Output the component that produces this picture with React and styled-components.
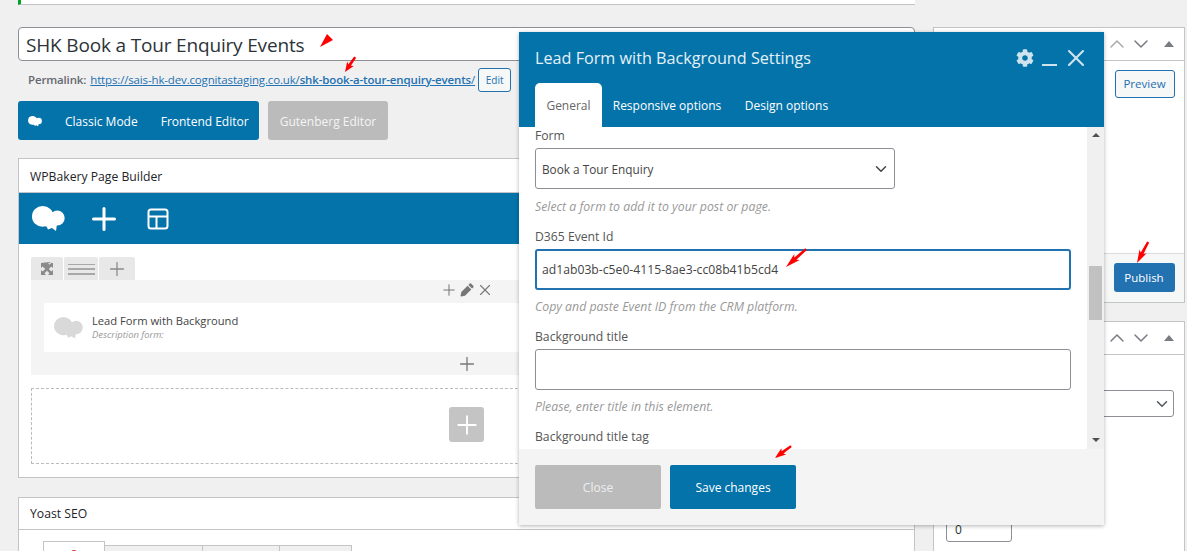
import React from 'react';
import styled, { createGlobalStyle } from 'styled-components';
import { Plus, X, ChevronUp, ChevronDown } from 'lucide-react';
import { FaCog } from 'react-icons/fa';

const Global = createGlobalStyle`
  html, body { margin: 0; padding: 0; height: 551px; overflow: hidden; background: #f0f0f1; }
  * { box-sizing: border-box; }
  body { font-family: "Open Sans", "Noto Sans", sans-serif; color: #3c434a; }
`;

const Page = styled.div`
  position: relative;
  width: 1187px;
  height: 551px;
  overflow: hidden;
  display: flex;
  gap: 18px;
  padding-left: 18px;
  align-items: flex-start;
`;
const Main = styled.div`
  width: 897px;
  flex: none;
  display: flex;
  flex-direction: column;
`;
const Side = styled.div`
  width: 251.5px;
  flex: none;
  padding-top: 27px;
  display: flex;
  flex-direction: column;
  gap: 18px;
`;
const Notice = styled.div`
  height: 5px;
  background: #fff;
  border-left: 3px solid #00a32a;
  border-bottom: 1px solid #c3c4c7;
  margin-bottom: 22px;
`;
const TitleInput = styled.div`
  height: 34px;
  background: #fff;
  border: 1px solid #8c8f94;
  border-radius: 4px;
  font-size: 19px;
  letter-spacing: -0.17px;
  line-height: 34px;
  padding-left: 7px;
  color: #2c3338;
`;
const PermaRow = styled.div`
  height: 24px;
  margin-top: 7px;
  padding-left: 10px;
  display: flex;
  align-items: center;
  font-size: 11.5px;
  letter-spacing: -0.15px;
  color: #646970;
`;
const PermaLabel = styled.b`
  font-weight: 600;
  margin-right: 4px;
  padding-bottom: 2px;
`;
const PermaLink = styled.a`
  color: #2271b1;
  text-decoration: underline;
  padding-bottom: 2px;
  b { font-weight: 600; }
`;
const SmallButton = styled.span`
  margin-left: 3px;
  width: 33px;
  height: 24px;
  border: 1px solid #2271b1;
  border-radius: 3px;
  background: #f6f7f7;
  color: #2271b1;
  font-size: 10px;
  letter-spacing: 0;
  display: flex;
  align-items: center;
  justify-content: center;
`;
const ModeBar = styled.div`
  display: flex;
  margin-top: 9px;
  gap: 9px;
  height: 39px;
`;
const ModeGroup = styled.div`
  width: 241px;
  background: #0473aa;
  border-radius: 3px;
  color: #fff;
  font-size: 12px;
  display: flex;
  align-items: center;
  padding: 1px 0 0 10px;
`;
const ModeText = styled.span`
  margin-left: ${p => p.$gap}px;
`;
const GrayMode = styled.div`
  width: 120px;
  background: #bbbbbb;
  border-radius: 3px;
  color: #f4f4f4;
  font-size: 12px;
  padding-top: 1px;
  display: flex;
  align-items: center;
  justify-content: center;
`;
const Box = styled.section`
  background: #fff;
  border: 1px solid #c3c4c7;
  margin-top: ${p => p.$top}px;
`;
const BoxHead = styled.h2`
  margin: 0;
  height: 34px;
  padding-left: 11px;
  border-bottom: 1px solid #c3c4c7;
  font-size: 12.2px;
  font-weight: 500;
  line-height: 35px;
  color: #1d2327;
`;
const Toolbar = styled.div`
  height: 51px;
  background: #0473aa;
  display: flex;
  align-items: center;
  color: #fff;
  padding-left: 13px;
`;
const ToolSlot = styled.span`
  display: flex;
  margin-left: ${p => p.$gap || 0}px;
`;
const BuilderBody = styled.div`
  padding: 13px 12px 13px;
`;
const RowTabs = styled.div`
  display: flex;
  gap: 1px;
  height: 23px;
`;
const RowTab = styled.span`
  width: ${p => p.$w}px;
  background: #e8e8e8;
  border-radius: 2px 2px 0 0;
  display: flex;
  align-items: center;
  justify-content: center;
  color: #8a8a8a;
`;
const Lines = styled.span`
  width: 27px;
  height: 11px;
  margin-top: 1px;
  border-top: 1px solid #a8a8a8;
  border-bottom: 2px solid #a8a8a8;
  position: relative;
  &::after {
    content: "";
    position: absolute;
    left: 0;
    right: 0;
    top: 3px;
    height: 2px;
    background: #a8a8a8;
  }
`;
const Row = styled.div`
  height: 95px;
  background: #f4f4f4;
  padding: 0 13px;
  display: flex;
  flex-direction: column;
`;
const RowControls = styled.div`
  height: 23px;
  padding-bottom: 3px;
  display: flex;
  align-items: center;
  justify-content: center;
  color: #777;
`;
const ControlSlot = styled.span`
  width: 18px;
  display: flex;
  align-items: center;
  justify-content: center;
`;
const Element = styled.div`
  height: 49px;
  background: #fff;
  display: flex;
  align-items: center;
  padding-left: 10px;
`;
const ElementText = styled.div`
  margin-left: 9px;
  display: flex;
  flex-direction: column;
  padding-bottom: 2px;
`;
const ElementTitle = styled.span`
  font-size: 11.2px;
  line-height: 15px;
  font-weight: 500;
  color: #444;
`;
const ElementDesc = styled.span`
  font-size: 9.4px;
  line-height: 13px;
  font-style: italic;
  color: #999;
`;
const RowFoot = styled.div`
  flex: 1;
  display: flex;
  align-items: center;
  justify-content: center;
  color: #777;
`;
const Dashed = styled.div`
  margin-top: 13px;
  height: 76px;
  padding-bottom: 3px;
  border: 1px dashed #bbb;
  display: flex;
  align-items: center;
  justify-content: center;
`;
const AddTile = styled.span`
  width: 35px;
  height: 35px;
  border-radius: 3px;
  background: #c4c4c4;
  color: #fff;
  display: flex;
  align-items: center;
  justify-content: center;
`;
const YoastHead = styled(BoxHead)`
  height: 32px;
  line-height: 32px;
`;
const YoastTabs = styled.div`
  display: flex;
  align-items: flex-end;
  margin: 11px 0 0 24px;
  height: 40px;
`;
const YoastTab = styled.span`
  width: ${p => p.$w}px;
  height: ${p => (p.$active ? 40 : 36)}px;
  background: ${p => (p.$active ? '#fff' : '#f0f0f1')};
  border: 1px solid #c3c4c7;
  border-left-width: ${p => (p.$first ? 1 : 0)}px;
  display: flex;
  justify-content: center;
  padding-top: 8px;
`;
const RedDot = styled.i`
  width: 6px;
  height: 6px;
  border-radius: 50%;
  background: #dc3232;
`;
const SideHead = styled.div`
  height: 33px;
  border-bottom: 1px solid #c3c4c7;
  display: flex;
  align-items: center;
  justify-content: flex-end;
  padding-right: 10px;
  color: #787c82;
`;
const TriUp = styled.span`
  width: 0;
  height: 0;
  margin-left: 11px;
  border: 5px solid transparent;
  border-top-width: 0;
  border-bottom: 6px solid #787c82;
`;
const PublishTop = styled.div`
  height: 192px;
  padding: 9px 9px 0;
  display: flex;
  justify-content: flex-end;
  align-items: flex-start;
`;
const PreviewBtn = styled.span`
  width: 60px;
  height: 28px;
  padding-bottom: 2px;
  border: 1px solid #2271b1;
  border-radius: 3px;
  background: #f6f7f7;
  color: #2271b1;
  font-size: 11.5px;
  display: flex;
  align-items: center;
  justify-content: center;
`;
const PublishFoot = styled.div`
  height: 49px;
  border-top: 1px solid #dcdcde;
  background: #f6f7f7;
  padding: 9px 9px 0;
  display: flex;
  justify-content: flex-end;
`;
const PublishBtn = styled.span`
  width: 61px;
  height: 29px;
  border-radius: 3px;
  background: #2271b1;
  color: #fff;
  font-size: 11.5px;
  display: flex;
  align-items: center;
  justify-content: center;
`;
const AttrBody = styled.div`
  padding: 35px 10px 0 12px;
  height: 198px;
`;
const AttrSelect = styled.div`
  width: 228px;
  height: 27px;
  border: 1px solid #8c8f94;
  border-radius: 3px;
  display: flex;
  align-items: center;
  justify-content: flex-end;
  padding-right: 2px;
  color: #50575e;
`;
const AttrInput = styled.div`
  margin-top: 105px;
  width: 66px;
  height: 20px;
  border: 1px solid #8c8f94;
  border-radius: 3px;
  padding-left: 8px;
  font-size: 12px;
  line-height: 14px;
  color: #2c3338;
`;

const Modal = styled.div`
  position: absolute;
  left: 519px;
  top: 32px;
  width: 585px;
  height: 493px;
  background: #fff;
  box-shadow: 0 1px 4px rgba(0, 0, 0, 0.3);
  display: flex;
  flex-direction: column;
`;
const ModalHead = styled.div`
  height: 95px;
  flex: none;
  background: #0473aa;
  padding: 0 16px;
  display: flex;
  flex-direction: column;
`;
const ModalTitleRow = styled.div`
  height: 51px;
  display: flex;
  align-items: center;
  color: #e5f1f7;
`;
const ModalTitle = styled.h3`
  margin: 0;
  flex: 1;
  font-size: 16.2px;
  font-weight: 400;
`;
const HeadIcons = styled.div`
  display: flex;
  align-items: center;
  gap: 8px;
  margin-right: -2px;
  color: #cfe3ee;
`;
const Minimize = styled.span`
  width: 15px;
  height: 2px;
  margin-top: 15px;
  background: #cfe3ee;
`;
const ModalTabs = styled.div`
  display: flex;
  height: 44px;
`;
const ModalTab = styled.span`
  height: 44px;
  width: ${p => p.$w}px;
  flex: none;
  font-size: 12px;
  font-weight: ${p => (p.$active ? 400 : 500)};
  display: flex;
  align-items: center;
  justify-content: center;
  color: ${p => (p.$active ? '#666' : '#fff')};
  background: ${p => (p.$active ? '#fff' : 'transparent')};
  border-radius: 5px 5px 0 0;
`;
const ModalMiddle = styled.div`
  flex: 1;
  min-height: 0;
  display: flex;
`;
const ModalScroll = styled.div`
  flex: 1;
  padding: 1px 16px 0;
  overflow: hidden;
`;
const Label = styled.div`
  font-size: 12.2px;
  font-weight: 500;
  line-height: 16px;
  color: #555;
  margin-top: ${p => p.$top}px;
`;
const SelectField = styled.div`
  width: 360px;
  height: 41px;
  margin-top: 4px;
  border: 1px solid #8c8f94;
  border-radius: 3px;
  display: flex;
  align-items: center;
  justify-content: space-between;
  padding: 0 4px 0 6px;
  font-size: 11.8px;
  color: #444;
`;
const TextField = styled.div`
  width: 536px;
  height: 41px;
  margin-top: 4px;
  border: ${p => (p.$focus ? '2px solid #2271b1' : '1px solid #8c8f94')};
  border-radius: 3px;
  display: flex;
  align-items: center;
  padding-left: 5px;
  font-size: 12.2px;
  color: #444;
`;
const Hint = styled.div`
  font-size: 12.3px;
  font-style: italic;
  line-height: 16px;
  margin-top: ${p => p.$top || 9}px;
  color: #999;
`;
const Scrollbar = styled.div`
  width: 17px;
  flex: none;
  background: #f0f0f0;
  position: relative;
`;
const ScrollThumb = styled.div`
  position: absolute;
  left: 2px;
  top: 139px;
  width: 13px;
  height: 54px;
  background: #c1c1c1;
`;
const ScrollArrow = styled.span`
  position: absolute;
  left: 5px;
  ${p => (p.$down ? 'bottom: 7px;' : 'top: 6px;')}
  width: 0;
  height: 0;
  border-left: 4px solid transparent;
  border-right: 4px solid transparent;
  ${p => (p.$down ? 'border-top: 4px solid #505050;' : 'border-bottom: 4px solid #505050;')}
`;
const ModalFoot = styled.div`
  height: 76px;
  flex: none;
  background: #f4f4f4;
  padding: 16px;
  display: flex;
  gap: 9px;
`;
const FootButton = styled.span`
  width: 126px;
  height: 44px;
  border-radius: 2px;
  display: flex;
  align-items: center;
  justify-content: center;
  font-size: 12px;
  font-weight: ${p => (p.$primary ? 500 : 400)};
  background: ${p => (p.$primary ? '#0473aa' : '#bbbbbb')};
  color: ${p => (p.$primary ? '#fff' : '#eee')};
`;
const Overlay = styled.svg`
  position: absolute;
  left: 0;
  top: 0;
  width: 1187px;
  height: 551px;
  pointer-events: none;
`;
const LogoSvg = styled.svg`
  display: block;
  flex: none;
`;

const Cloud = ({ w, fill }) => (
  <LogoSvg width={w} viewBox="0 0 33 25" fill={fill}>
    <ellipse cx="10.700" cy="10.400" rx="10.700" ry="10.400" />
    <ellipse cx="25.300" cy="12" rx="7.400" ry="7.600" />
    <path d="M16 6h9v12l-1 7-4-3-4 1.500-1.500-3L9 19z" />
  </LogoSvg>
);

const FullscreenIcon = () => (
  <svg width="14" height="14" viewBox="0 0 14 14" fill="currentColor" stroke="none">
    <path d="M1 1h5L4.500 2.700 7 5.200 11 1.200 9.500 0M1 1v5l1.700-1.500 2.500 2.500-2.500 2.500L1 8v5h5l-1.500-1.700L7 8.800l2.500 2.500L8 13h5V8l-1.700 1.500L8.800 7l2.500-2.500L13 6V1H8l1.500 1.700L7 5.200 4.500 2.700 6 1z" fillRule="evenodd" />
  </svg>
);

const PencilIcon = () => (
  <svg width="14" height="14" viewBox="0 0 14 14" fill="currentColor">
    <path d="M9.500.8a1.300 1.300 0 0 1 1.800 0l1.900 1.900a1.300 1.300 0 0 1 0 1.800l-1.100 1.100-3.700-3.700zM7.600 2.700l3.700 3.700-6.300 6.300-3.700.8-.8-.6.800-3.900z" />
  </svg>
);

const arrowPoints = ([tx, ty], [bx, by]) => {
  const dx = bx - tx, dy = by - ty;
  const len = Math.hypot(dx, dy);
  const ux = dx / len, uy = dy / len, nx = -uy, ny = ux;
  const at = (d, s) => `${(tx + ux * d + nx * s).toFixed(1)},${(ty + uy * d + ny * s).toFixed(1)}`;
  const neck = len * 0.55;
  return [at(0, 0), at(neck, 4), at(neck * 0.85, 1.5), at(len, 1.4), at(len, -1), at(neck * 0.85, -1.5), at(neck, -4)].join(' ');
};

const arrows = [
  [[345, 72], [355, 57]],
  [[786, 267], [806, 249]],
  [[775, 458], [791, 446]],
  [[1137, 263], [1148, 242]],
];

export default function App() {
  return (
    <Page>
      <Global />
      <Main>
        <Notice />
        <TitleInput>SHK Book a Tour Enquiry Events</TitleInput>
        <PermaRow>
          <PermaLabel>Permalink:</PermaLabel>
          <PermaLink>https://sais-hk-dev.cognitastaging.co.uk/<b>shk-book-a-tour-enquiry-events</b>/</PermaLink>
          <SmallButton>Edit</SmallButton>
        </PermaRow>
        <ModeBar>
          <ModeGroup>
            <Cloud w={14} fill="#fff" />
            <ModeText $gap={23}>Classic Mode</ModeText>
            <ModeText $gap={23}>Frontend Editor</ModeText>
          </ModeGroup>
          <GrayMode>Gutenberg Editor</GrayMode>
        </ModeBar>
        <Box $top={18}>
          <BoxHead>WPBakery Page Builder</BoxHead>
          <Toolbar>
            <Cloud w={33} fill="#fff" />
            <ToolSlot $gap={21}><Plus size={36} strokeWidth={2} /></ToolSlot>
            <ToolSlot $gap={24}>
              <svg width="24" height="24" viewBox="0 0 24 24" fill="none" stroke="#fff" strokeWidth="2">
                <rect x="2.500" y="2.500" width="19" height="19" rx="2.500" />
                <path d="M2.500 9.500h19M10.500 9.500v12" />
              </svg>
            </ToolSlot>
          </Toolbar>
          <BuilderBody>
            <RowTabs>
              <RowTab $w={32}><FullscreenIcon /></RowTab>
              <RowTab $w={34}><Lines /></RowTab>
              <RowTab $w={36}><Plus size={22} strokeWidth={1.400} /></RowTab>
            </RowTabs>
            <Row>
              <RowControls>
                <ControlSlot><Plus size={22} strokeWidth={1.400} /></ControlSlot>
                <ControlSlot><PencilIcon /></ControlSlot>
                <ControlSlot><X size={22} strokeWidth={1.500} /></ControlSlot>
              </RowControls>
              <Element>
                <Cloud w={29} fill="#d9d9d9" />
                <ElementText>
                  <ElementTitle>Lead Form with Background</ElementTitle>
                  <ElementDesc>Description form:</ElementDesc>
                </ElementText>
              </Element>
              <RowFoot><Plus size={22} strokeWidth={1.400} /></RowFoot>
            </Row>
            <Dashed><AddTile><Plus size={30} strokeWidth={1.500} /></AddTile></Dashed>
          </BuilderBody>
        </Box>
        <Box $top={19}>
          <YoastHead>Yoast SEO</YoastHead>
          <YoastTabs>
            <YoastTab $w={62} $active $first><RedDot /></YoastTab>
            <YoastTab $w={98} />
            <YoastTab $w={77} />
            <YoastTab $w={72} />
          </YoastTabs>
        </Box>
      </Main>
      <Side>
        <Box $top={0}>
          <SideHead>
            <ChevronUp size={24} strokeWidth={1.500} color="#a7aaad" />
            <ChevronDown size={24} strokeWidth={1.500} />
            <TriUp />
          </SideHead>
          <PublishTop><PreviewBtn>Preview</PreviewBtn></PublishTop>
          <PublishFoot><PublishBtn>Publish</PublishBtn></PublishFoot>
        </Box>
        <Box $top={0}>
          <SideHead>
            <ChevronUp size={24} strokeWidth={1.500} />
            <ChevronDown size={24} strokeWidth={1.500} />
            <TriUp />
          </SideHead>
          <AttrBody>
            <AttrSelect><ChevronDown size={18} strokeWidth={2} /></AttrSelect>
            <AttrInput>0</AttrInput>
          </AttrBody>
        </Box>
      </Side>
      <Modal>
        <ModalHead>
          <ModalTitleRow>
            <ModalTitle>Lead Form with Background Settings</ModalTitle>
            <HeadIcons>
              <FaCog size={18} />
              <Minimize />
              <ToolSlot $gap={-3}><X size={28} strokeWidth={1.800} /></ToolSlot>
            </HeadIcons>
          </ModalTitleRow>
          <ModalTabs>
            <ModalTab $w={67} $active>General</ModalTab>
            <ModalTab $w={130}>Responsive options</ModalTab>
            <ModalTab $w={109}>Design options</ModalTab>
          </ModalTabs>
        </ModalHead>
        <ModalMiddle>
          <ModalScroll>
            <Label $top={0}>Form</Label>
            <SelectField>Book a Tour Enquiry<ChevronDown size={18} strokeWidth={2} /></SelectField>
            <Hint $top={10}>Select a form to add it to your post or page.</Hint>
            <Label $top={14}>D365 Event Id</Label>
            <TextField $focus>ad1ab03b-c5e0-4115-8ae3-cc08b41b5cd4</TextField>
            <Hint>Copy and paste Event ID from the CRM platform.</Hint>
            <Label $top={14}>Background title</Label>
            <TextField />
            <Hint>Please, enter title in this element.</Hint>
            <Label $top={14}>Background title tag</Label>
          </ModalScroll>
          <Scrollbar>
            <ScrollArrow />
            <ScrollThumb />
            <ScrollArrow $down />
          </Scrollbar>
        </ModalMiddle>
        <ModalFoot>
          <FootButton>Close</FootButton>
          <FootButton $primary>Save changes</FootButton>
        </ModalFoot>
      </Modal>
      <Overlay viewBox="0 0 1187 551">
        <polygon points="320,47 327,34 333,40" fill="#f00" />
        {arrows.map(([tip, tail], i) => (
          <polygon key={i} points={arrowPoints(tip, tail)} fill="#f00" />
        ))}
      </Overlay>
    </Page>
  );
}
